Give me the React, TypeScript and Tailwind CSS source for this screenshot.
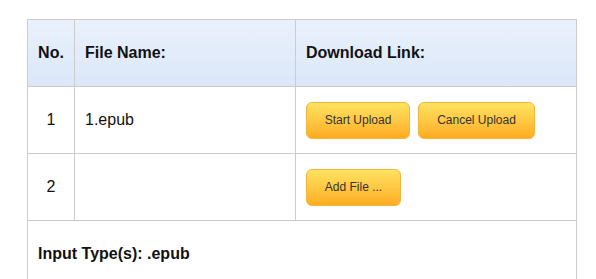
export default function App() {
  const btn =
    "h-[37px] rounded-[6px] border border-[#f3b53c] bg-gradient-to-b from-[#ffe35f] to-[#ffac1f] px-4 text-[12px] text-[#333] font-['Liberation_Sans',Arial,sans-serif]";
  return (
    <div className="min-h-screen bg-white pt-[19px] pl-[27px] font-['Liberation_Sans',Arial,sans-serif] text-[#111]">
      <table className="w-[550px] border-collapse border border-[#cccccc] table-fixed">
        <colgroup>
          <col className="w-[47px]" />
          <col className="w-[221px]" />
          <col />
        </colgroup>
        <thead>
          <tr className="h-[67px] bg-gradient-to-b from-[#e9f1fc] to-[#dbe7f8] text-[16px] font-bold">
            <th className="border border-[#cccccc] text-center font-bold">No.</th>
            <th className="border border-[#cccccc] pl-[10px] text-left font-bold">File Name:</th>
            <th className="border border-[#cccccc] pl-[10px] text-left font-bold">Download Link:</th>
          </tr>
        </thead>
        <tbody className="text-[16px]">
          <tr className="h-[67px]">
            <td className="border border-[#cccccc] text-center">1</td>
            <td className="border border-[#cccccc] pl-[10px]">1.epub</td>
            <td className="border border-[#cccccc] pl-[10px]">
              <div className="flex gap-[8px]">
                <button className={btn + " w-[104px]"}>Start Upload</button>
                <button className={btn + " w-[117px]"}>Cancel Upload</button>
              </div>
            </td>
          </tr>
          <tr className="h-[67px]">
            <td className="border border-[#cccccc] text-center">2</td>
            <td className="border border-[#cccccc] pl-[10px]"></td>
            <td className="border border-[#cccccc] pl-[10px]">
              <button className={btn + " w-[95px]"}>Add File ...</button>
            </td>
          </tr>
          <tr className="h-[67px]">
            <td colSpan={3} className="border border-[#cccccc] pl-[10px] text-[16px] font-bold">
              Input Type(s): .epub
            </td>
          </tr>
        </tbody>
      </table>
    </div>
  );
}
